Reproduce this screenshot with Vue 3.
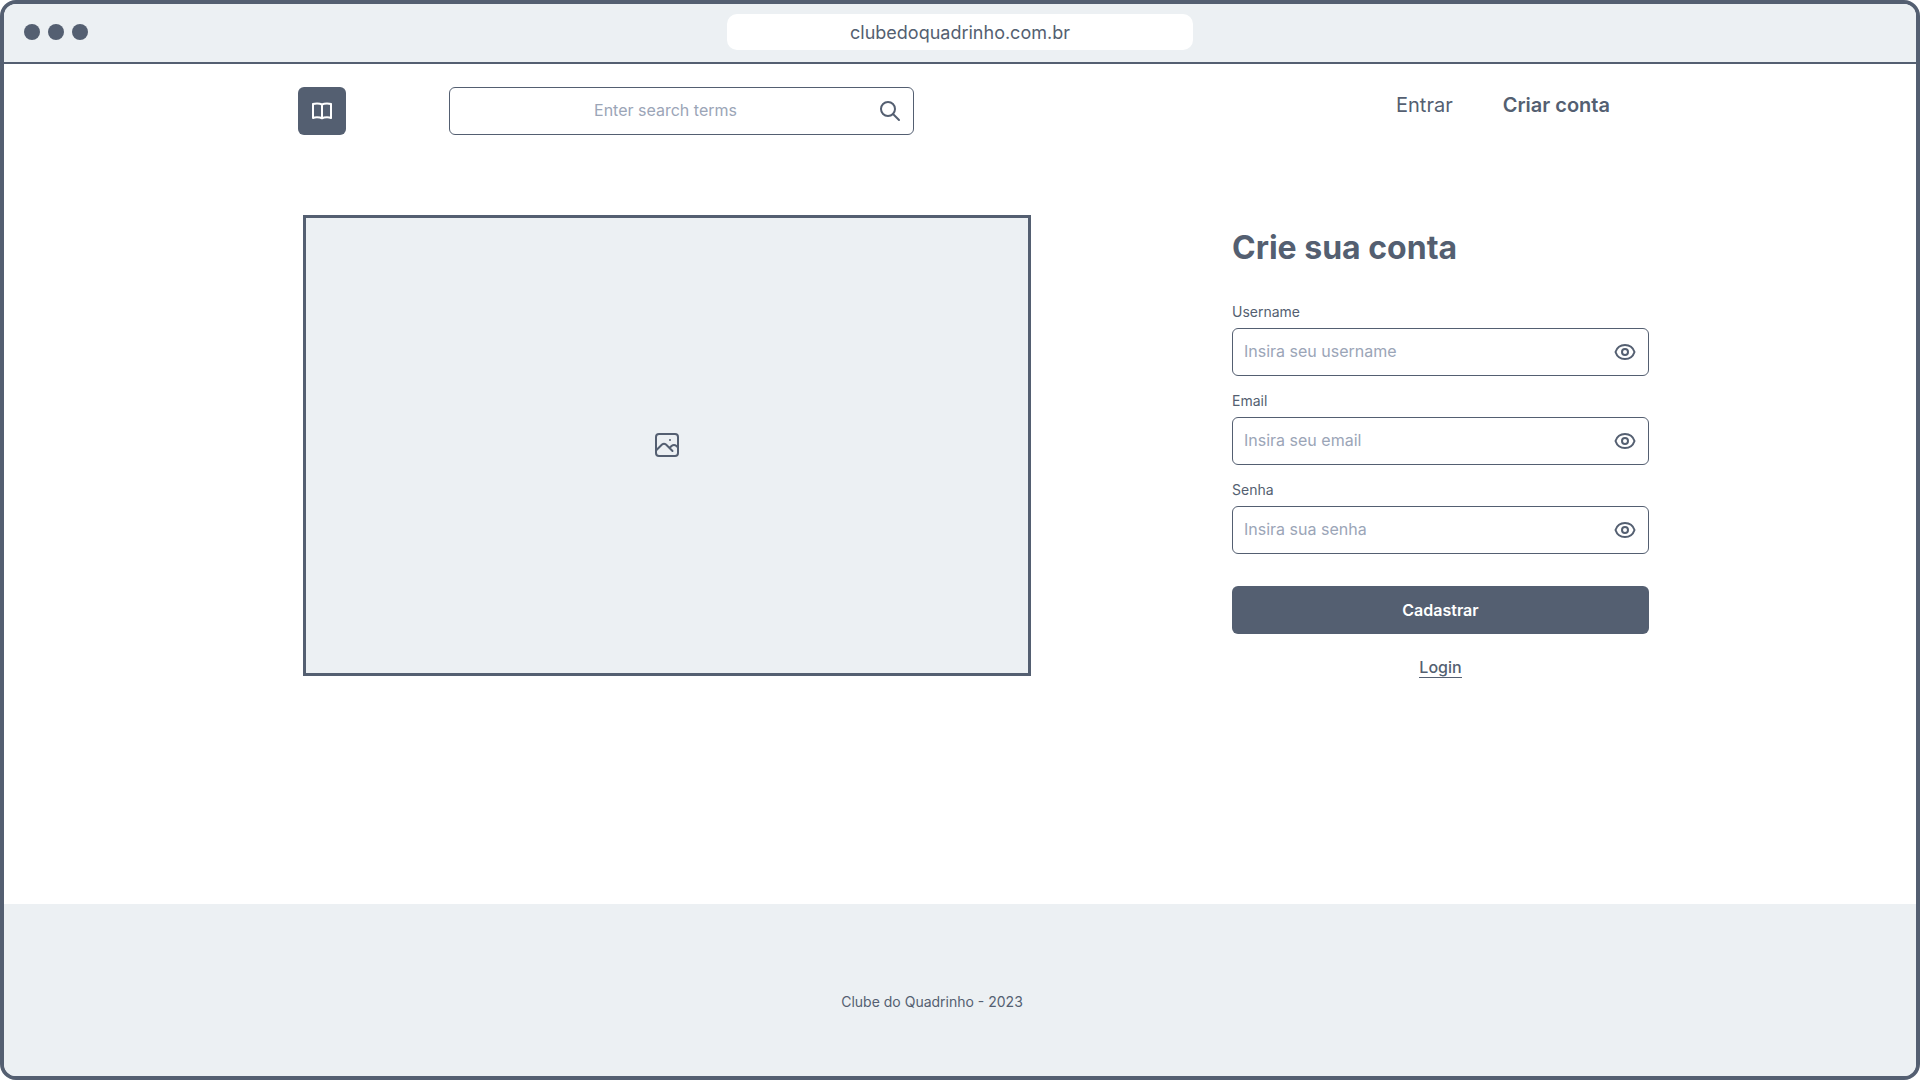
<script setup>
import { ref } from 'vue'

const search = ref('')
const fields = ref([
  { id: 'username', label: 'Username', type: 'text', placeholder: 'Insira seu username', value: '' },
  { id: 'email', label: 'Email', type: 'email', placeholder: 'Insira seu email', value: '' },
  { id: 'senha', label: 'Senha', type: 'password', placeholder: 'Insira sua senha', value: '' },
])
</script>

<template>
  <div class="window">
    <div class="chrome">
      <div class="dots"><span class="dot"></span><span class="dot"></span><span class="dot"></span></div>
      <div class="address">clubedoquadrinho.com.br</div>
    </div>

    <header class="header">
      <a class="logo" href="#" aria-label="Clube do Quadrinho">
        <svg width="24" height="24" viewBox="0 0 24 24" fill="none" stroke="currentColor" stroke-width="2" stroke-linejoin="round">
          <path d="M12 5.5C10.500 4.700 9 4.500 7 4.500C5 4.500 3.500 4.800 3 5V19C4 18.500 5.500 18.300 7 18.300C9 18.300 10.800 18.600 12 19.300C13.200 18.600 15 18.300 17 18.300C18.500 18.300 20 18.500 21 19V5C20.500 4.800 19 4.500 17 4.500C15 4.500 13.500 4.700 12 5.500V19" />
        </svg>
      </a>
      <form class="box search" role="search" @submit.prevent>
        <input v-model="search" class="input" type="text" placeholder="Enter search terms" aria-label="Search" />
        <button class="icon-button" type="submit" aria-label="Search">
          <svg width="24" height="24" viewBox="0 0 24 24" fill="none" stroke="currentColor" stroke-width="2" stroke-linecap="round">
            <circle cx="10" cy="10" r="7" />
            <path d="M15 15L21 21" />
          </svg>
        </button>
      </form>
      <nav class="nav">
        <a class="nav-link" href="#">Entrar</a>
        <a class="nav-link strong" href="#">Criar conta</a>
      </nav>
    </header>

    <main class="main">
      <div class="picture">
        <svg width="26" height="26" viewBox="0 0 26 26" fill="none" stroke="currentColor" stroke-width="2" stroke-linecap="round" stroke-linejoin="round">
          <rect x="2" y="2" width="22" height="22" rx="3" />
          <path d="M2.500 18L8 12.500C9.200 11.500 10.800 11.500 12 12.500L18.500 19M15.500 16L17.500 14C19 12.700 21 12.700 22.500 14L24 15.500" />
          <circle cx="16" cy="8" r="1" fill="currentColor" stroke="none" />
        </svg>
      </div>

      <form class="signup" @submit.prevent>
        <h1 class="title">Crie sua conta</h1>
        <div v-for="field in fields" :key="field.id" class="field">
          <label class="label" :for="field.id">{{ field.label }}</label>
          <div class="box">
            <input :id="field.id" v-model="field.value" class="input" :type="field.type" :placeholder="field.placeholder" />
            <button class="icon-button" type="button" aria-label="Mostrar">
              <svg width="24" height="24" viewBox="0 0 24 24" fill="none" stroke="currentColor" stroke-width="2">
                <path d="M2.500 12C4 7.500 7.500 5 12 5S20 7.500 21.500 12C20 16.500 16.500 19 12 19S4 16.500 2.500 12Z" stroke-linejoin="round" />
                <circle cx="12" cy="12" r="3" />
              </svg>
            </button>
          </div>
        </div>
        <button class="submit" type="submit">Cadastrar</button>
        <a class="login" href="#">Login</a>
      </form>
    </main>

    <footer class="footer">
      <p class="copyright">Clube do Quadrinho - 2023</p>
    </footer>
  </div>
</template>

<style>
body {
  margin: 0;
  background: #fff;
}
</style>

<style scoped>
* {
  box-sizing: border-box;
}

.window {
  display: flex;
  flex-direction: column;
  min-height: 100vh;
  border: 4px solid #545f71;
  border-radius: 16px;
  overflow: hidden;
  background: #fff;
  color: #545f71;
  font-family: Inter, "Liberation Sans", sans-serif;
}

.chrome {
  display: grid;
  grid-template-columns: 723fr 466fr 723fr;
  align-items: center;
  height: 60px;
  padding-bottom: 2px;
  border-bottom: 2px solid #545f71;
  background: #ecf0f3;
}

.dots {
  display: flex;
  gap: 8px;
  padding-left: 20px;
}

.dot {
  width: 16px;
  height: 16px;
  border-radius: 50%;
  background: #545f71;
}

.address {
  padding-top: 2px;
  border-radius: 10px;
  background: #fff;
  font-size: 18px;
  font-weight: 400;
  line-height: 34px;
  text-align: center;
}

.header {
  display: grid;
  grid-template-columns: 294fr 48px 103fr 465fr 482fr 520fr;
  padding-top: 23px;
}

.logo {
  grid-column: 2;
  display: flex;
  align-items: center;
  justify-content: center;
  height: 48px;
  border-radius: 6px;
  background: #545f71;
  color: #fff;
}

.box {
  display: flex;
  align-items: center;
  gap: 8px;
  height: 48px;
  padding: 0 11px;
  border: 1px solid #545f71;
  border-radius: 6px;
}

.search {
  grid-column: 4;
}

.search .input {
  text-align: center;
}

.input {
  flex: 1;
  min-width: 0;
  height: 24px;
  padding: 0 0 2px;
  border: 0;
  outline: 0;
  background: transparent;
  color: inherit;
  font: 400 16px/22px Inter, "Liberation Sans", sans-serif;
}

.input::placeholder {
  color: #9ba5b7;
  opacity: 1;
}

.icon-button {
  display: flex;
  padding: 0;
  border: 0;
  background: transparent;
  color: inherit;
}

.nav {
  grid-column: 6;
  display: flex;
  gap: 50px;
  padding-top: 4px;
}

.nav-link {
  color: inherit;
  font-size: 20px;
  line-height: 28px;
  text-decoration: none;
}

.strong {
  font-weight: 600;
}

.main {
  display: grid;
  grid-template-columns: 299fr 728fr 201fr 417fr 267fr;
  align-items: start;
  flex: 1;
  padding: 80px 0;
}

.picture {
  grid-column: 2;
  display: flex;
  align-items: center;
  justify-content: center;
  height: 461px;
  padding-bottom: 1px;
  border: 3px solid #545f71;
  background: #ecf0f3;
}

.signup {
  grid-column: 4;
  display: flex;
  flex-direction: column;
  padding-top: 13px;
}

.title {
  margin: 0 0 34px;
  font-size: 32px;
  font-weight: 700;
  line-height: 40px;
}

.field {
  margin-bottom: 15px;
}

.label {
  display: block;
  padding-bottom: 6px;
  font-size: 14px;
  line-height: 20px;
}

.submit {
  height: 48px;
  margin-top: 17px;
  border: 0;
  border-radius: 6px;
  background: #545f71;
  color: #fff;
  font: 600 16px/24px Inter, "Liberation Sans", sans-serif;
}

.login {
  align-self: center;
  margin-top: 23px;
  border-bottom: 1px solid #545f71;
  color: inherit;
  font-size: 16px;
  font-weight: 500;
  line-height: 20px;
  text-decoration: none;
}

.footer {
  display: flex;
  justify-content: center;
  height: 172px;
  padding: 88px 56px 0 0;
  background: #ecf0f3;
}

.copyright {
  margin: 0;
  font-size: 14px;
  line-height: 20px;
}
</style>
